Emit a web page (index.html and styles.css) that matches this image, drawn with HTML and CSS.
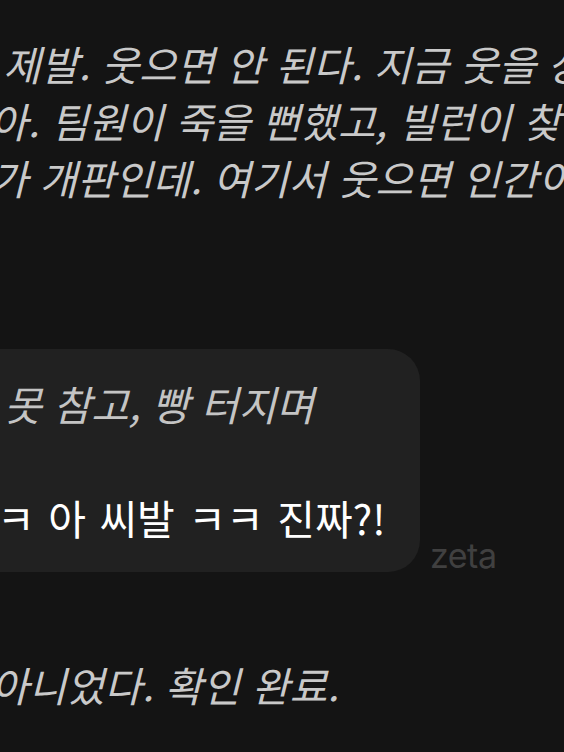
FILE: index.html
```html
<!DOCTYPE html>
<html lang="ko">
<head>
<meta charset="utf-8">
<link rel="stylesheet" href="styles.css">
</head>
<body>
<main class="chat">
  <section class="narration">
    <p class="line l1"><span class="pre">제발,&nbsp;</span>제발. 웃으면 안 된다. 지금 웃을 상황이 아니다.</p>
    <p class="line l2"><span class="pre">지금은 진지해야 해. 이건 장난이 아니</span>아. 팀원이 죽을 뻔했고, 빌런이 찾아왔고,</p>
    <p class="line l3"><span class="pre">분위기</span>가 개판인데. 여기서 웃으면 인간이 아니다.</p>
  </section>
  <div class="row">
    <div class="bubble">
      <p class="b-line act l5"><span class="pre">결국&nbsp;</span>못 참고, 빵 터지며</p>
      <p class="b-line gap">&nbsp;</p>
      <p class="b-line say l6"><span class="pre">ㅋㅋ</span>ㅋ 아 씨발 ㅋㅋ 진짜?!</p>
    </div>
    <span class="name">zeta</span>
  </div>
  <section class="narration">
    <p class="line l4"><span class="pre">그래, 난 인간이 </span>아니었다. 확인 완료.</p>
  </section>
</main>
</body>
</html>
```
FILE: styles.css
```css
html, body {
  margin: 0;
  padding: 0;
  background: #141414;
  overflow: hidden;
}
body {
  width: 564px;
  height: 752px;
  font-family: "Noto Sans CJK KR", "Noto Sans", sans-serif;
}
.chat {
  padding-top: 35px;
}
.narration {
  margin: 0;
}
.line,
.b-line {
  display: flex;
  margin: 0;
  white-space: nowrap;
  font-size: 41px;
  line-height: 57px;
}
.line {
  font-style: italic;
  color: #c9c9c9;
}
.pre {
  display: flex;
  justify-content: flex-end;
  width: 0;
  flex: none;
}
.l1 { margin-left: 3px; }
.l2 { margin-left: -10px; }
.l3 { margin-left: -10px; }
.l4 { margin-left: -9px; }
.row {
  display: flex;
  align-items: flex-end;
  margin-top: 143px;
  margin-bottom: 84px;
}
.bubble {
  flex: none;
  margin-left: -300px;
  width: 720px;
  box-sizing: border-box;
  background: #212121;
  border-radius: 32px;
  padding: 26px 30px 26px 300px;
}
.act {
  font-style: italic;
  color: #c4c4c4;
}
.l5 { margin-left: 4px; }
.say {
  color: #ffffff;
  word-spacing: 2px;
}
.l6 { margin-left: -3px; }
.name {
  margin-left: 10px;
  margin-bottom: -1px;
  font-family: "Inter", "Noto Sans", sans-serif;
  font-size: 34px;
  line-height: 34px;
  letter-spacing: -0.5px;
  color: #404040;
}
```
